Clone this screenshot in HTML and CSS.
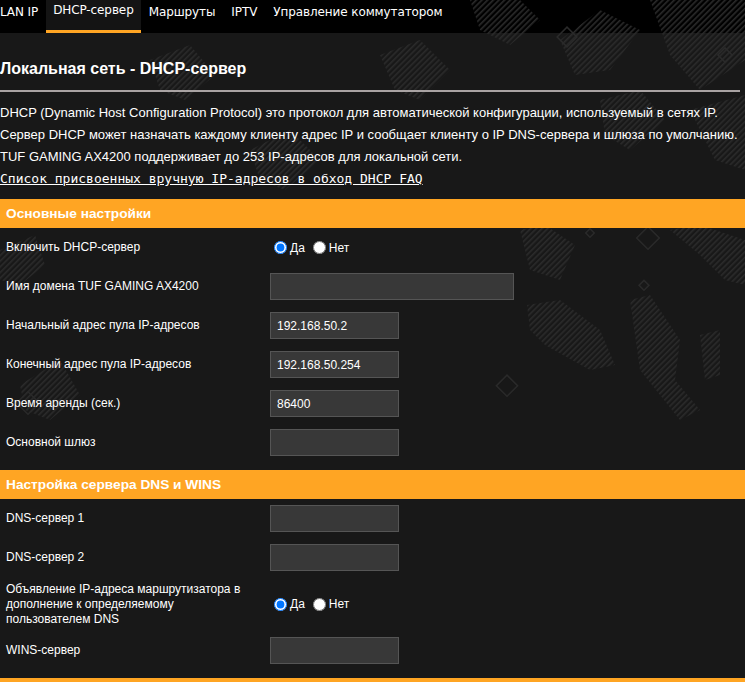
FILE: index.html
```html
<!DOCTYPE html>
<html lang="ru">
<head>
<meta charset="utf-8">
<title>DHCP-сервер</title>
<link rel="stylesheet" href="styles.css">
</head>
<body>
<svg class="camo" width="745" height="682" viewBox="0 0 745 682" aria-hidden="true">
  <defs>
    <pattern id="stripes" width="4" height="4" patternUnits="userSpaceOnUse" patternTransform="rotate(45)">
      <rect x="0" y="0" width="1.6" height="4" fill="#2b2b2b"></rect>
    </pattern>
  </defs>
  <g fill="url(#stripes)">
    <polygon points="470,0 520,0 540,20 510,45 480,30"></polygon>
    <polygon points="560,40 600,10 640,30 610,70 575,75"></polygon>
    <polygon points="650,0 745,0 745,60 700,90 670,55"></polygon>
    <polygon points="380,55 420,40 450,70 420,100 395,90"></polygon>
    <polygon points="600,100 640,90 665,120 630,150 605,135"></polygon>
    <polygon points="690,110 745,95 745,170 715,160"></polygon>
    <polygon points="520,230 545,225 575,245 560,280 530,270"></polygon>
    <polygon points="527,305 560,300 600,330 615,365 590,370 545,345 530,330"></polygon>
    <polygon points="630,300 650,295 680,340 675,380 700,410 680,420 640,370"></polygon>
    <polygon points="670,230 700,225 745,240 745,285 725,280 700,255"></polygon>
    <polygon points="700,335 720,330 720,375 705,380"></polygon>
    <polygon points="0,250 35,235 45,265 20,285 0,280"></polygon>
    <polygon points="20,385 60,360 80,395 50,420 25,410"></polygon>
    <polygon points="150,60 190,45 215,75 185,100 160,90"></polygon>
    <polygon points="250,150 290,130 320,160 285,190 260,180"></polygon>
  </g>
  <g fill="none" stroke="#2a2a2a" stroke-width="1.5">
    <rect x="560" y="30" width="14" height="14" transform="rotate(45 567 37)"></rect>
    <rect x="640" y="230" width="16" height="16" transform="rotate(45 648 238)"></rect>
    <rect x="587" y="230" width="6" height="6" transform="rotate(45 590 233)"></rect>
    <rect x="640" y="282" width="7" height="7" transform="rotate(45 644 286)"></rect>
    <rect x="500" y="378" width="15" height="15" transform="rotate(45 507 385)"></rect>
    <rect x="20" y="395" width="16" height="16" transform="rotate(45 28 403)"></rect>
    <rect x="720" y="50" width="10" height="10" transform="rotate(45 725 55)"></rect>
  </g>
</svg>
<nav class="tabs">
  <a class="tab tab-first">LAN IP</a>
  <a class="tab active">DHCP-сервер</a>
  <a class="tab">Маршруты</a>
  <a class="tab">IPTV</a>
  <a class="tab">Управление коммутатором</a>
</nav>
<main class="page">
  <h1 class="title">Локальная сеть - DHCP-сервер</h1>
  <div class="divider"></div>
  <div class="desc">
    <p>DHCP (Dynamic Host Configuration Protocol) это протокол для автоматической конфигурации, используемый в сетях IP.</p>
    <p>Сервер DHCP может назначать каждому клиенту адрес IP и сообщает клиенту о IP DNS-сервера и шлюза по умолчанию.</p>
    <p>TUF GAMING AX4200 поддерживает до 253 IP-адресов для локальной сети.</p>
    <p><a class="faq" href="#">Список присвоенных вручную IP-адресов в обход DHCP FAQ</a></p>
  </div>

  <section class="form-table">
    <div class="section-head">Основные настройки</div>
    <div class="row">
      <div class="label">Включить DHCP-сервер</div>
      <div class="field">
        <label class="radio"><input type="radio" name="dhcp" checked>Да</label>
        <label class="radio"><input type="radio" name="dhcp">Нет</label>
      </div>
    </div>
    <div class="row">
      <div class="label">Имя домена TUF GAMING AX4200</div>
      <div class="field"><input class="text wide" type="text" value=""></div>
    </div>
    <div class="row">
      <div class="label">Начальный адрес пула IP-адресов</div>
      <div class="field"><input class="text" type="text" value="192.168.50.2"></div>
    </div>
    <div class="row">
      <div class="label">Конечный адрес пула IP-адресов</div>
      <div class="field"><input class="text" type="text" value="192.168.50.254"></div>
    </div>
    <div class="row">
      <div class="label">Время аренды (сек.)</div>
      <div class="field"><input class="text" type="text" value="86400"></div>
    </div>
    <div class="row">
      <div class="label">Основной шлюз</div>
      <div class="field"><input class="text" type="text" value=""></div>
    </div>
  </section>

  <section class="form-table form-table-next">
    <div class="section-head">Настройка сервера DNS и WINS</div>
    <div class="row">
      <div class="label">DNS-сервер 1</div>
      <div class="field"><input class="text" type="text" value=""></div>
    </div>
    <div class="row">
      <div class="label">DNS-сервер 2</div>
      <div class="field"><input class="text" type="text" value=""></div>
    </div>
    <div class="row row-tall">
      <div class="label">Объявление IP-адреса маршрутизатора в дополнение к определяемому пользователем DNS</div>
      <div class="field">
        <label class="radio"><input type="radio" name="adv" checked>Да</label>
        <label class="radio"><input type="radio" name="adv">Нет</label>
      </div>
    </div>
    <div class="row">
      <div class="label">WINS-сервер</div>
      <div class="field"><input class="text" type="text" value=""></div>
    </div>
  </section>

  <section class="form-table form-table-next">
    <div class="section-head"></div>
  </section>
</main>
</body>
</html>
```

FILE: styles.css
```css
html, body {
  margin: 0;
  padding: 0;
}
body {
  position: relative;
  background: #181818;
  color: #ffffff;
  font-family: "Liberation Sans", Arial, sans-serif;
  font-size: 13px;
  overflow: hidden;
}
.camo {
  position: absolute;
  left: 0;
  top: 0;
  z-index: 1;
  pointer-events: none;
}
.tabs {
  display: flex;
  height: 33px;
  background: #000000;
  margin-left: -8px;
}
.tab {
  position: relative;
  z-index: 2;
  display: block;
  box-sizing: border-box;
  height: 33px;
  padding: 5px 8px 0;
  font-family: "DejaVu Sans", Verdana, sans-serif;
  font-size: 12px;
  line-height: 14px;
  color: #ffffff;
  letter-spacing: -0.1px;
}
.tab.active {
  background: #141414;
  border-bottom: 3px solid #ffa523;
  padding: 3px 7px 0;
}
.page {
  position: relative;
  z-index: 2;
  padding-top: 26px;
}
.title {
  margin: 0;
  font-size: 16px;
  line-height: 19px;
  font-weight: bold;
}
.divider {
  margin: 12px 5px 0 0;
  height: 2px;
  background: #a9a3a3;
}
.desc {
  margin-top: 10px;
}
.desc p {
  margin: 0;
  line-height: 22px;
}
.faq {
  font-family: "DejaVu Sans Mono", "Liberation Mono", monospace;
  font-size: 13px;
  color: #ffffff;
  text-decoration: underline;
}
.form-table {
  margin-top: 9px;
}
.form-table-next {
  margin-top: 8px;
}
.section-head {
  height: 29px;
  background: #ffa523;
  padding-left: 6px;
  font-weight: bold;
  font-size: 13.7px;
  line-height: 29px;
  color: #ffffff;
}
.row {
  display: grid;
  grid-template-columns: 264px 1fr;
  align-items: center;
  min-height: 39px;
  font-size: 12px;
}
.row-tall {
  min-height: 54px;
}
.label {
  padding: 0 20px 0 6px;
  line-height: 15px;
}
.field {
  padding-left: 6px;
  display: flex;
  align-items: center;
}
.radio {
  display: inline-flex;
  align-items: center;
  margin-right: 4px;
}
.radio input {
  margin: 0 3px 0 4px;
  width: 13px;
  height: 13px;
}
.text {
  box-sizing: border-box;
  width: 129px;
  height: 27px;
  margin: 0;
  padding: 0 6px;
  background: #383838;
  border: 1px solid #555555;
  color: #ffffff;
  font-family: "Liberation Sans", Arial, sans-serif;
  font-size: 12px;
  outline: none;
}
.text.wide {
  width: 244px;
}
```
